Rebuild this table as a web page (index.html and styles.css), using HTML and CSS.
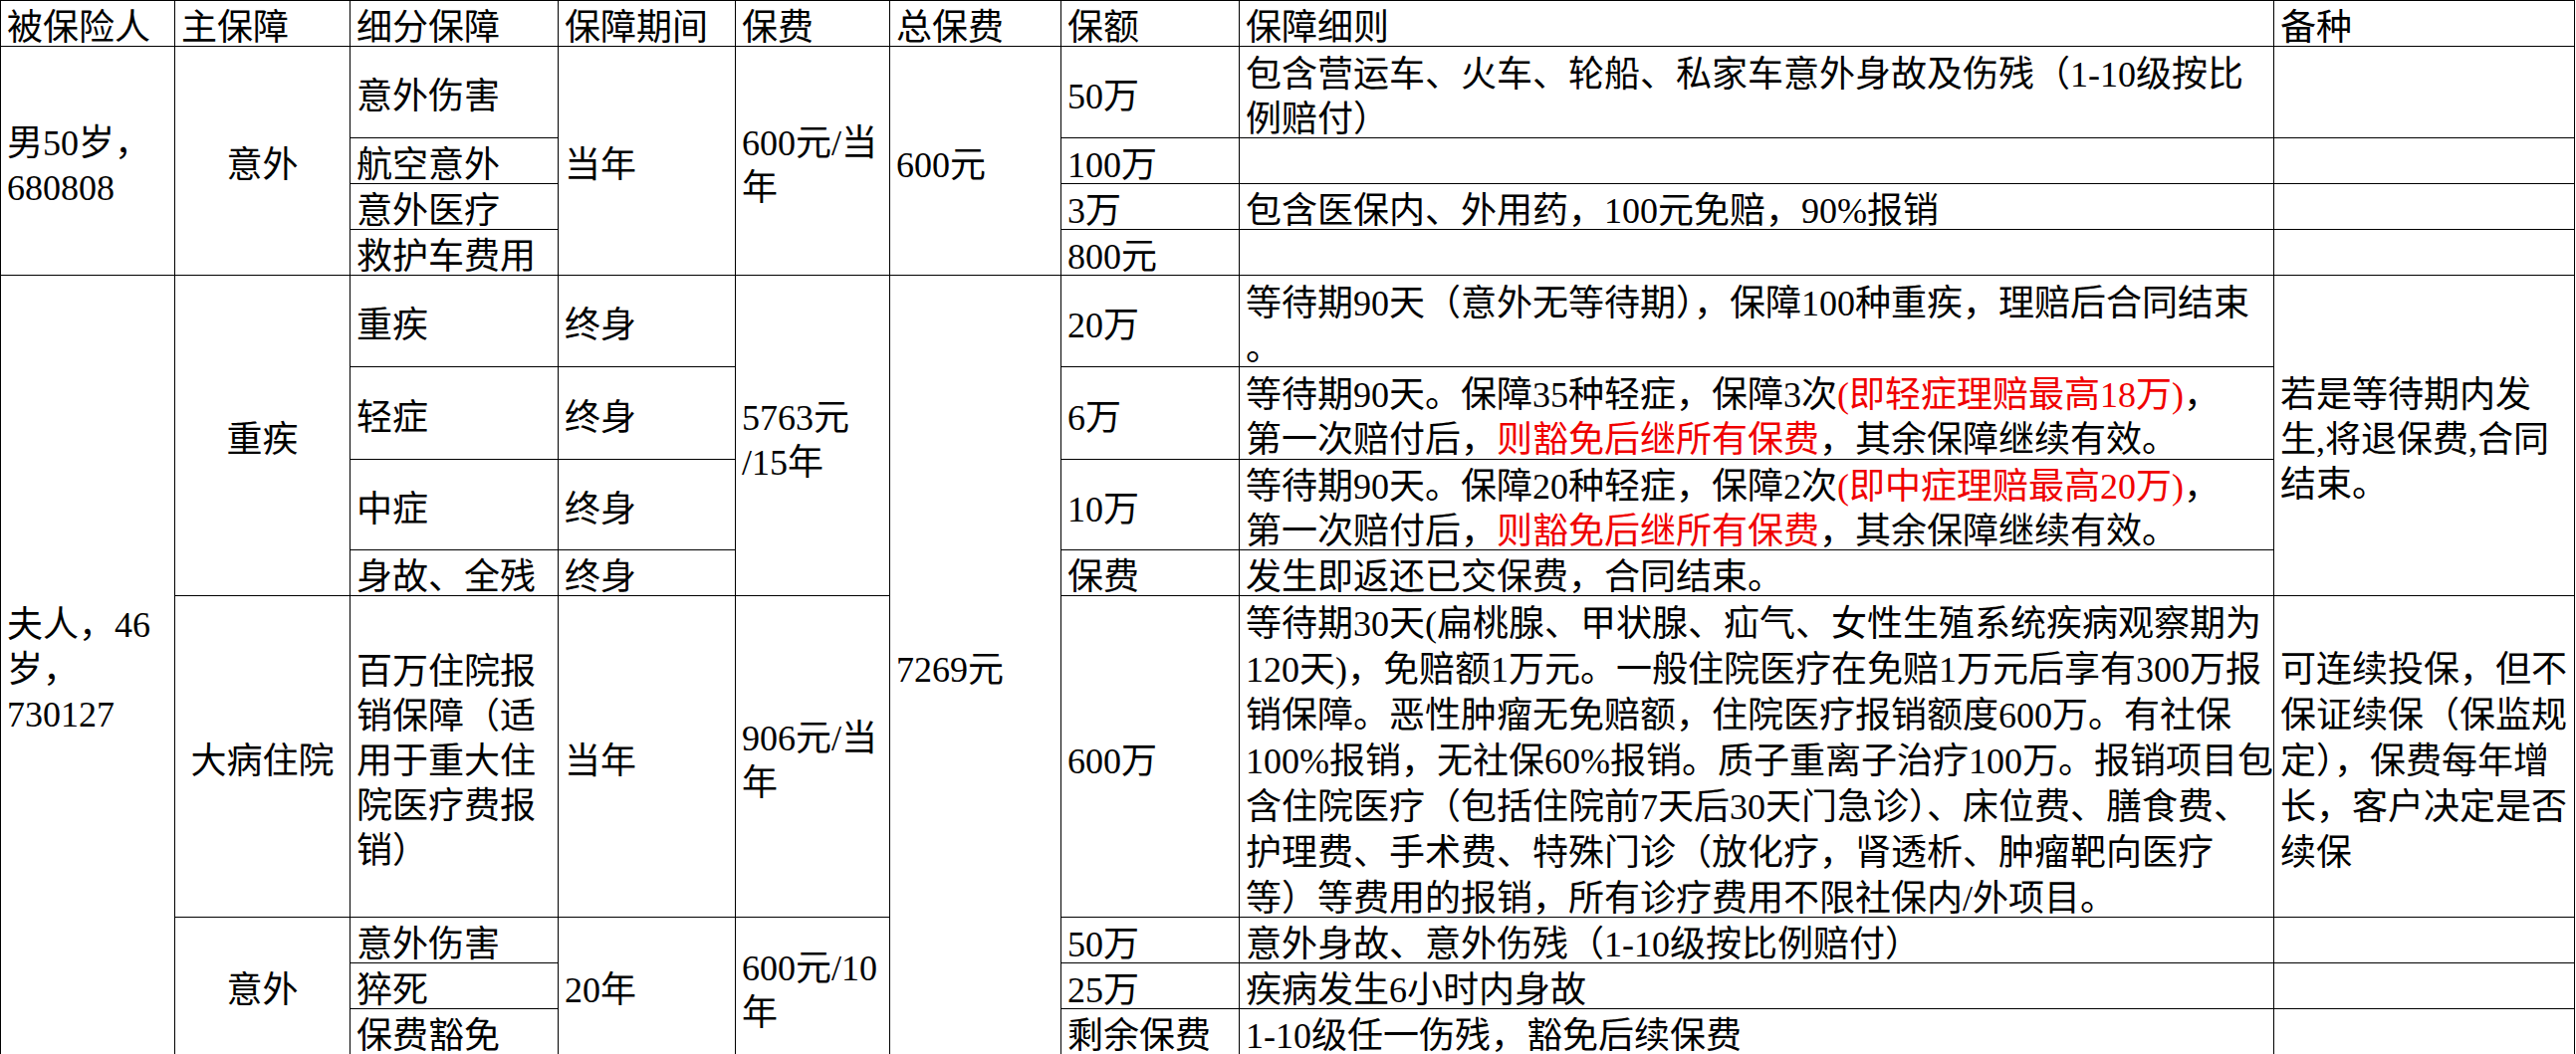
FILE: index.html
```html
<!DOCTYPE html>
<html lang="zh-CN">
<head>
<meta charset="utf-8">
<title>保险方案</title>
<link rel="stylesheet" href="styles.css">
</head>
<body>
<table class="sheet">
  <colgroup>
    <col class="w-insured"><col class="w-main"><col class="w-sub"><col class="w-term"><col class="w-fee"><col class="w-total"><col class="w-amount"><col class="w-detail"><col class="w-note">
  </colgroup>
  <tbody>
    <tr class="h46">
      <td><span class="t">被保险人</span></td>
      <td><span class="t">主保障</span></td>
      <td><span class="t">细分保障</span></td>
      <td><span class="t">保障期间</span></td>
      <td><span class="t">保费</span></td>
      <td><span class="t">总保费</span></td>
      <td><span class="t">保额</span></td>
      <td><span class="t">保障细则</span></td>
      <td><span class="t">备种</span></td>
    </tr>

    <tr class="h92">
      <td rowspan="4"><span class="t">男50岁，<br>680808</span></td>
      <td rowspan="4" class="center"><span class="t">意外</span></td>
      <td><span class="t">意外伤害</span></td>
      <td rowspan="4"><span class="t">当年</span></td>
      <td rowspan="4"><span class="t">600元/当<br>年</span></td>
      <td rowspan="4"><span class="t">600元</span></td>
      <td><span class="t">50万</span></td>
      <td><span class="t">包含营运车、火车、轮船、私家车意外身故及伤残（1-10级按比<br>例赔付）</span></td>
      <td></td>
    </tr>
    <tr class="h46">
      <td><span class="t">航空意外</span></td>
      <td><span class="t">100万</span></td>
      <td></td>
      <td></td>
    </tr>
    <tr class="h46">
      <td><span class="t">意外医疗</span></td>
      <td><span class="t">3万</span></td>
      <td><span class="t">包含医保内、外用药，100元免赔，90%报销</span></td>
      <td></td>
    </tr>
    <tr class="h46">
      <td><span class="t">救护车费用</span></td>
      <td><span class="t">800元</span></td>
      <td></td>
      <td></td>
    </tr>

    <tr class="h92">
      <td rowspan="8"><span class="t">夫人，46<br>岁，<br>730127</span></td>
      <td rowspan="4" class="center"><span class="t">重疾</span></td>
      <td><span class="t">重疾</span></td>
      <td><span class="t">终身</span></td>
      <td rowspan="4"><span class="t">5763元<br>/15年</span></td>
      <td rowspan="8"><span class="t">7269元</span></td>
      <td><span class="t">20万</span></td>
      <td class="top"><span class="t">等待期90天（意外无等待期），保障100种重疾，理赔后合同结束<br>。</span></td>
      <td rowspan="4"><span class="t">若是等待期内发<br>生,将退保费,合同<br>结束。</span></td>
    </tr>
    <tr class="h93">
      <td><span class="t">轻症</span></td>
      <td><span class="t">终身</span></td>
      <td><span class="t">6万</span></td>
      <td><span class="t">等待期90天。保障35种轻症，保障3次<span class="red">(即轻症理赔最高18万)</span>，<br>第一次赔付后，<span class="red">则豁免后继所有保费</span>，其余保障继续有效。</span></td>
    </tr>
    <tr class="h91">
      <td><span class="t">中症</span></td>
      <td><span class="t">终身</span></td>
      <td><span class="t">10万</span></td>
      <td><span class="t">等待期90天。保障20种轻症，保障2次<span class="red">(即中症理赔最高20万)</span>，<br>第一次赔付后，<span class="red">则豁免后继所有保费</span>，其余保障继续有效。</span></td>
    </tr>
    <tr class="h46">
      <td><span class="t">身故、全残</span></td>
      <td><span class="t">终身</span></td>
      <td><span class="t">保费</span></td>
      <td><span class="t">发生即返还已交保费，合同结束。</span></td>
    </tr>

    <tr class="h323">
      <td class="center"><span class="t">大病住院</span></td>
      <td><span class="t">百万住院报<br>销保障（适<br>用于重大住<br>院医疗费报<br>销）</span></td>
      <td><span class="t">当年</span></td>
      <td><span class="t">906元/当<br>年</span></td>
      <td><span class="t">600万</span></td>
      <td class="tall"><span class="t">等待期30天(扁桃腺、甲状腺、疝气、女性生殖系统疾病观察期为<br>120天)，免赔额1万元。一般住院医疗在免赔1万元后享有300万报<br>销保障。恶性肿瘤无免赔额，住院医疗报销额度600万。有社保<br>100%报销，无社保60%报销。质子重离子治疗100万。报销项目包<br>含住院医疗（包括住院前7天后30天门急诊）、床位费、膳食费、<br>护理费、手术费、特殊门诊（放化疗，肾透析、肿瘤靶向医疗<br>等）等费用的报销，所有诊疗费用不限社保内/外项目。</span></td>
      <td class="tall"><span class="t">可连续投保，但不<br>保证续保（保监规<br>定），保费每年增<br>长，客户决定是否<br>续保</span></td>
    </tr>

    <tr class="h46">
      <td rowspan="3" class="center"><span class="t">意外</span></td>
      <td><span class="t">意外伤害</span></td>
      <td rowspan="3"><span class="t">20年</span></td>
      <td rowspan="3"><span class="t">600元/10<br>年</span></td>
      <td><span class="t">50万</span></td>
      <td><span class="t">意外身故、意外伤残（1-10级按比例赔付）</span></td>
      <td></td>
    </tr>
    <tr class="h46">
      <td><span class="t">猝死</span></td>
      <td><span class="t">25万</span></td>
      <td><span class="t">疾病发生6小时内身故</span></td>
      <td></td>
    </tr>
    <tr class="h45">
      <td><span class="t">保费豁免</span></td>
      <td><span class="t">剩余保费</span></td>
      <td><span class="t">1-10级任一伤残，豁免后续保费</span></td>
      <td></td>
    </tr>
  </tbody>
</table>
</body>
</html>
```

FILE: styles.css
```css
html, body {
  margin: 0;
  padding: 0;
  background: #ffffff;
}

.sheet {
  border-collapse: collapse;
  table-layout: fixed;
  width: 2585px;
  font-family: "Liberation Serif", "Noto Sans CJK SC", serif;
  font-size: 36px;
  line-height: 45px;
  color: #000000;
}

.w-insured { width: 175px; }
.w-main { width: 176px; }
.w-sub { width: 209px; }
.w-term { width: 178px; }
.w-fee { width: 155px; }
.w-total { width: 172px; }
.w-amount { width: 179px; }
.w-detail { width: 1039px; }
.w-note { width: 302px; }

.sheet td {
  border: 1px solid #000000;
  padding: 0 2px 0 6px;
  vertical-align: middle;
  text-align: left;
  white-space: nowrap;
  overflow: hidden;
}

.sheet td.center {
  text-align: center;
  padding: 0;
}

.sheet td.tall {
  line-height: 46px;
}

.t {
  line-height: 30px;
  vertical-align: -5px;
}

.red {
  color: #f00000;
}

.h45 { height: 45px; }
.h46 { height: 46px; }
.h91 { height: 91px; }
.h92 { height: 92px; }
.h93 { height: 93px; }
.h323 { height: 323px; }
```
